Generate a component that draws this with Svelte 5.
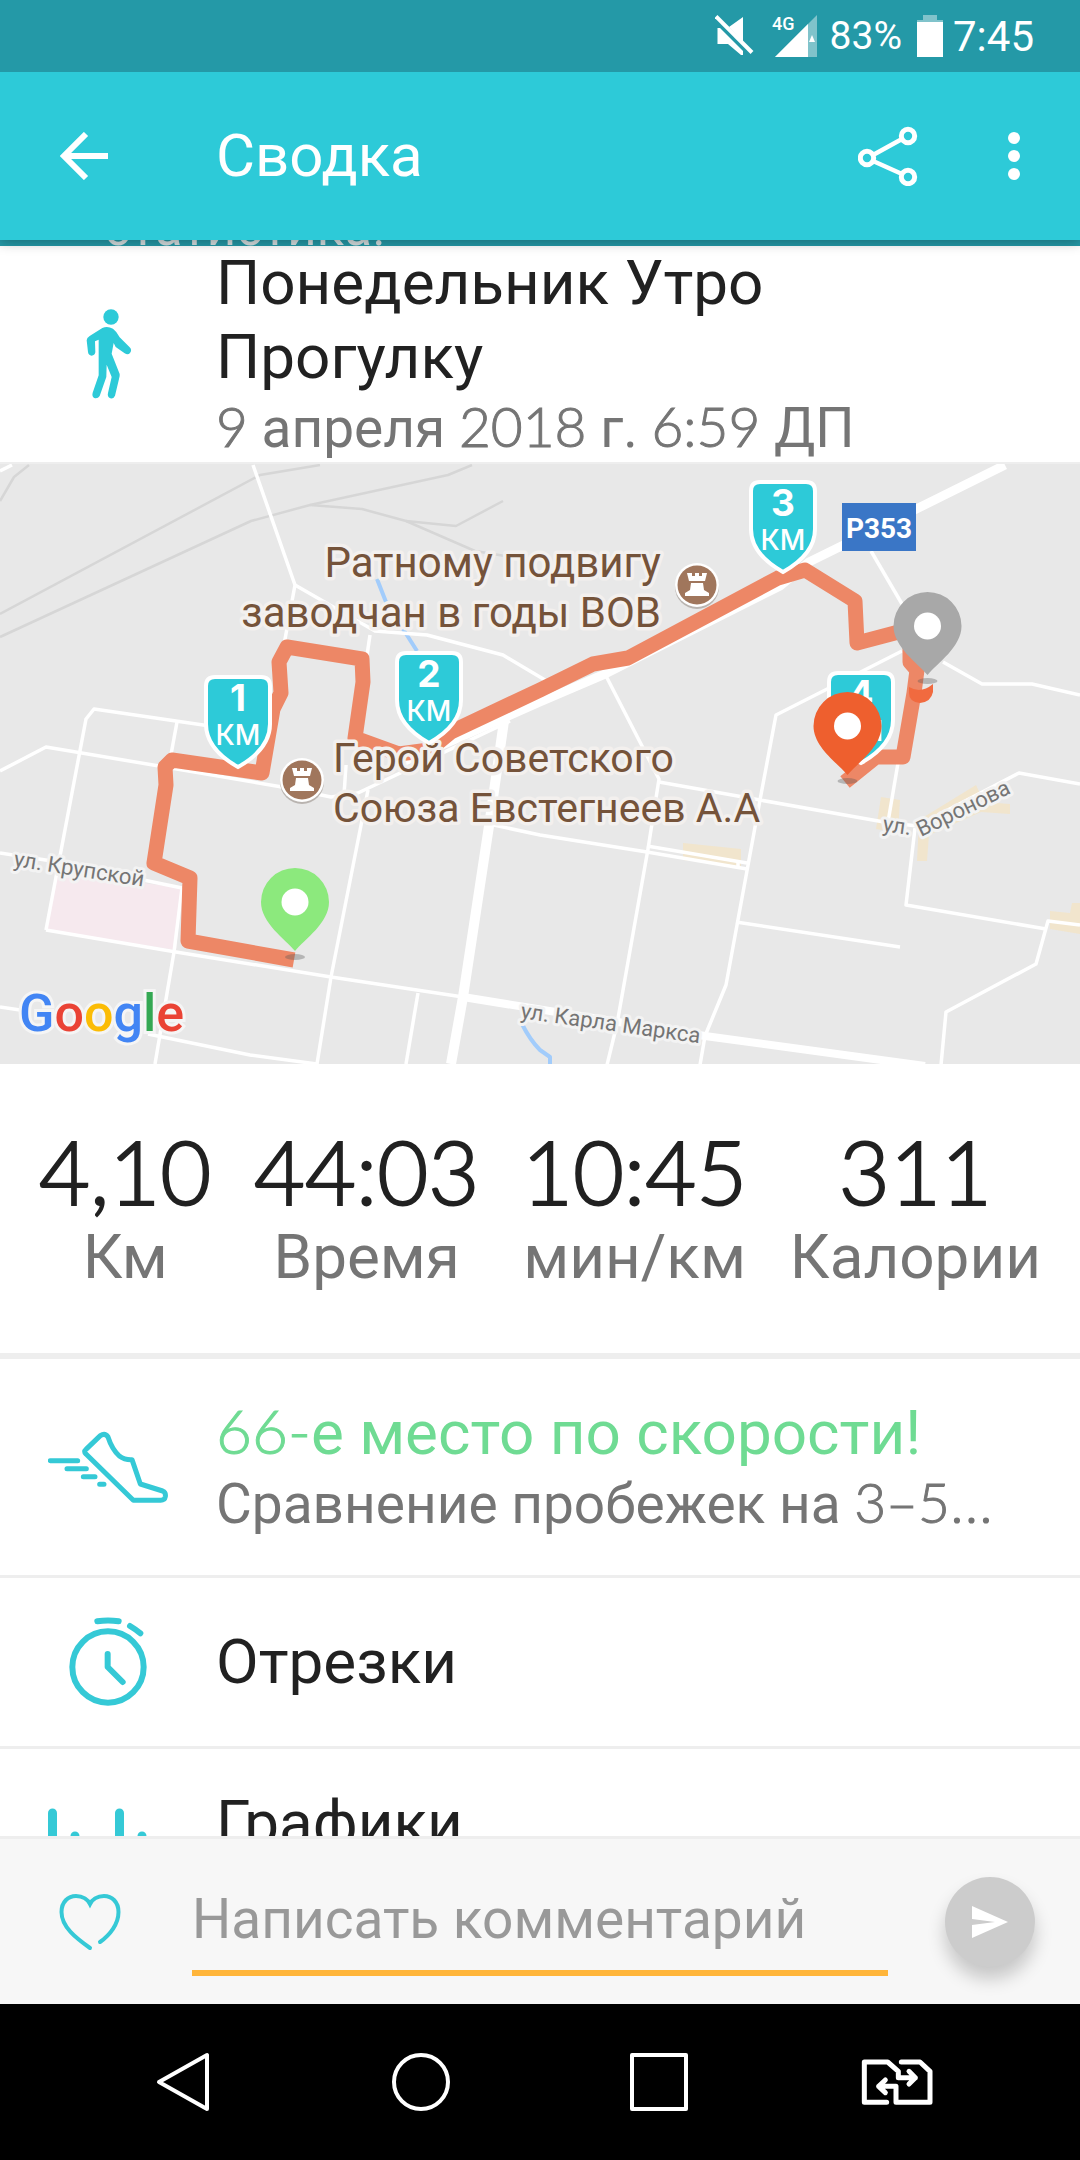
<script>
  const shields = [
    { x: 238, y: 769, n: '1' },
    { x: 429, y: 745, n: '2' },
    { x: 783, y: 574, n: '3' },
    { x: 861, y: 765, n: '4' }
  ];
  const castles = [
    { x: 302, y: 780 },
    { x: 697, y: 585 }
  ];
  const stats = [
    { value: '4,10', label: 'Км' },
    { value: '44:03', label: 'Время' },
    { value: '10:45', label: 'мин/км' },
    { value: '311', label: 'Калории' }
  ];
  const roads = [
    'M0 471L12 465', 'M253 465L295 585L283 650', 'M295 585L375 631L427 635L503 655L545 680', 'M370 635L366 662',
    'M46 930L86 719L94 709L210 726', 'M177 722L170 760', 'M0 771L46 747L165 767L282 787L331 797L358 793L510 721',
    'M0 853L52 861L182 888', 'M46 930L176 952L331 977L463 997', 'M182 888L174 952L155 1064', 'M346 765L344 795',
    'M368 790L331 977L317 1064', 'M489 824L540 835L647 852L747 869', 'M647 846L747 863', 'M738 862L738 868',
    'M418 993L406 1064', 'M0 1007L20 1010', 'M148 1034L250 1055L317 1064', 'M605 674L659 779L648 849L617 1024L607 1065',
    'M659 782L760 800L884 822L917 826', 'M902 651L776 715L760 800L726 985L705 1036L700 1065',
    'M943 662L982 684L1032 684L1080 695', 'M871 551L902 604', 'M898 763L888 822', 'M917 826L1019 773L1080 784',
    'M915 828L906 905L1046 929', 'M1080 925L1048 921L1036 964L946 1012L941 1065', 'M736 922L900 947'
  ];
  const rails = [
    'M0 614L260 475L320 465', 'M0 637L251 521L310 505L448 475L472 465', 'M310 505L362 509L406 521L475 551L505 556',
    'M406 521L456 526L503 501', 'M0 501L14 477L29 465'
  ];
</script>

{#snippet pin(x, y, color)}
  <ellipse cx={x} cy={y + 55} rx="10" ry="3" fill="#555" opacity=".35" />
  <path d="M{x} {y + 49}C{x - 10} {y + 37} {x - 34} {y + 21} {x - 34} {y}A34 34 0 0 1 {x + 34} {y}C{x + 34} {y + 21} {x + 10} {y + 37} {x} {y + 49}Z" fill={color} />
  <circle cx={x} cy={y} r="13.5" fill="#fff" />
{/snippet}

<div class="screen">
  <div class="status">
    <svg width="40" height="42" viewBox="0 0 40 42" fill="#fff" aria-label="Без звука">
      <path d="M14 12L28 2V27ZM2.5 13H5L28 36V40H26L13 29H2.5Z" />
      <path d="M1 1.5L37 37.5" stroke="#fff" stroke-width="4" />
    </svg>
    <svg class="signal" width="46" height="42" viewBox="0 0 46 42" aria-label="Сигнал 4G">
      <path d="M45 0V42H3Z" fill="#80c3cb" />
      <path d="M36 9V42H3Z" fill="#fff" />
      <path d="M40 20L43 27H37Z" fill="#fff" />
      <text class="net" x="0" y="15">4G</text>
    </svg>
    <span class="percent">83%</span>
    <svg class="battery" width="26" height="42" viewBox="0 0 26 42" aria-label="Батарея">
      <path d="M6 0H20V5H26V8H0V5H6Z" fill="#80c3cb" />
      <path d="M0 7H26V42H0Z" fill="#fff" />
    </svg>
    <span class="time">7:45</span>
  </div>

  <header>
    <button class="back" aria-label="Назад">
      <svg width="48" height="48" viewBox="0 0 48 48" fill="none" stroke="#fff" stroke-width="6"><path d="M48 24H4M26 2L4 24L26 46" /></svg>
    </button>
    <h1>Сводка</h1>
    <button aria-label="Поделиться">
      <svg width="60" height="60" viewBox="0 0 60 60" fill="none" stroke="#fff" stroke-width="5">
        <circle cx="50" cy="10" r="6.7" /><circle cx="9" cy="32" r="6.7" /><circle cx="50" cy="51" r="6.7" />
        <path d="M15 29L44 13M15 35L44 48" stroke-width="4.5" />
      </svg>
    </button>
    <button aria-label="Ещё">
      <svg width="12" height="48" viewBox="0 0 12 48" fill="#fff"><circle cx="6" cy="6" r="6" /><circle cx="6" cy="24" r="6" /><circle cx="6" cy="42" r="6" /></svg>
    </button>
  </header>

  <main>
    <div class="banner"><span>статистика!</span></div>

    <section class="row activity">
      <svg width="52" height="94" viewBox="157 52 156 282" fill="#2dcad8">
        <circle cx="244" cy="82" r="23" />
        <path d="M218 115Q233 108 250 117Q262 126 270 143L300 173Q308 181 301 190Q295 197 285 191L258 172L252 160L246 192L270 253Q271 260 268 268L256 318Q252 328 242 326Q232 322 235 310L246 262L231 225L230 262L210 319Q204 328 194 325Q186 320 189 309L207 257V150L196 155L197 188Q195 198 186 198Q176 197 175 187L171 152Q171 144 180 139Z" />
      </svg>
      <div>
        <h2>Понедельник Утро Прогулку</h2>
        <p><i>9</i> апреля <i>2018</i> г. <i>6:59</i> ДП</p>
      </div>
    </section>

    <svg class="map" viewBox="0 464 1080 600" aria-label="Карта маршрута">
      <rect y="464" width="1080" height="600" fill="#e8e8e8" />
      <path d="M57 872L182 888L176 950L46 930Z" fill="#f6e9ee" />
      <path d="M683 843L741 849V866L683 860ZM881 797L900 800L898 833L876 829ZM919 820L976 785L984 802L1010 804V814L981 812L929 835L927 861H917ZM1050 911L1070 913L1072 903H1080V934L1050 929Z" fill="#f1e5cd" />
      <g fill="none" stroke-linejoin="round">
        {#each rails as d}<path {d} stroke="#d6d6d6" stroke-width="2.5" />{/each}
        <path d="M377 579L386 602L417 651M522 1024Q530 1040 540 1050L550 1057V1065" stroke="#a2ccfb" stroke-width="4" />
        {#each roads as d}<path {d} stroke="#fff" stroke-width="3.5" />{/each}
        <path d="M400 763L458 738L540 702L605 674L780 586L809 562L872 531L1005 465" stroke="#fff" stroke-width="9" />
        <path d="M504 721L489 826L463 997L451 1064" stroke="#fff" stroke-width="10" />
        <path d="M463 997L705 1036L925 1066" stroke="#fff" stroke-width="8" />
        <path d="M294 960L188 941L190 878L154 863L166 785L165 767L172 760L262 773L273 709L281 693L279 662L287 647L362 659L363 682L355 738L399 754L429 750L451 732L540 690L593 664L628 658L778 578L805 570L855 601L857 643L910 629L910 662L917 670L914 693L903 757H876L845 782" stroke="#ed8766" stroke-width="15" />
      </g>
      <path d="M909 687Q921 694 933 684V692Q931 702 920 703Q909 702 909 693Z" fill="#f16a3f" />

      {#each castles as c}
        <circle cx={c.x} cy={c.y + 2} r="22" fill="#b9b4b0" />
        <circle cx={c.x} cy={c.y} r="22" fill="#fff" />
        <circle cx={c.x} cy={c.y} r="19.5" fill="#a0765c" />
        <path transform="translate({c.x} {c.y})" d="M-10 -12H-5V-9H-2V-12H2V-9H5V-12H10L8 -4H-8ZM-6 -2H6L7 5L12 8V11H-12V8L-7 5Z" fill="#fff" />
      {/each}

      <g class="poi">
        <text x="661" y="577" text-anchor="end">Ратному подвигу</text>
        <text x="661" y="627" text-anchor="end">заводчан в годы ВОВ</text>
      </g>
      <g class="poi hero">
        <text x="333" y="772">Герой Советского</text>
        <text x="333" y="822">Союза Евстегнеев А.А</text>
      </g>
      <g class="street">
        <text transform="translate(13 866) rotate(9)">ул. Крупской</text>
        <text transform="translate(520 1018) rotate(8)">ул. Карла Маркса</text>
        <text transform="translate(882 831) rotate(8)">ул.</text>
        <text transform="translate(921 837) rotate(-26)">Воронова</text>
      </g>

      <rect x="842" y="503" width="74" height="48" fill="#3a76c6" />
      <text class="route-no" x="879" y="538" text-anchor="middle">P353</text>

      {#each shields as s}
        <g transform="translate({s.x} {s.y})">
          <path d="M-23 -92H23Q32 -92 32 -83V-45C32 -24 16 -11 0 -2C-16 -11 -32 -24 -32 -45V-83Q-32 -92 -23 -92Z" fill="#2dcad8" stroke="#fff" stroke-width="4" />
          <text class="km-n" y="-58" text-anchor="middle">{s.n}</text>
          <text class="km" y="-24" text-anchor="middle">КМ</text>
        </g>
      {/each}
      {@render pin(295, 902, '#8ce97d')}
      {@render pin(927.5, 626, '#a8a8a8')}
      {@render pin(847.5, 726, '#ee5f2e')}

      <text class="google" x="19" y="1031"><tspan fill="#4285f4">G</tspan><tspan fill="#ea4335">o</tspan><tspan fill="#fbbc05">o</tspan><tspan fill="#4285f4">g</tspan><tspan fill="#34a853">l</tspan><tspan fill="#ea4335">e</tspan></text>
    </svg>

    <section class="stats">
      {#each stats as s}
        <div class="stat"><b>{s.value}</b><span>{s.label}</span></div>
      {/each}
    </section>

    <section class="row">
      <svg width="120" height="74" viewBox="54 60 360 222" fill="none" stroke="#35c9d6" stroke-width="15" stroke-linecap="round" stroke-linejoin="round">
        <path d="M61 152H143M111 176H169M160 200H195M209 223H222" />
        <path d="M168 118L211 77Q225 68 234 81Q246 118 268 138Q284 150 306 149L331 222L398 243Q408 247 406 260Q404 271 392 271H310L168 132Q160 125 168 118Z" />
      </svg>
      <div>
        <h2 class="rank"><i>66-</i>е место по скорости!</h2>
        <p>Сравнение пробежек на <i>3–5</i>...</p>
      </div>
    </section>

    <section class="row single">
      <svg width="84" height="94" viewBox="107 617 252 282" fill="none" stroke="#35c9d6" stroke-width="18" stroke-linecap="round" stroke-linejoin="round">
        <circle cx="233" cy="773" r="107" />
        <path d="M201 636Q233 631 265 636M299 650Q316 660 330 672M232 734V773L277 818" />
      </svg>
      <h2>Отрезки</h2>
    </section>

    <section class="row charts">
      <svg width="120" height="94" viewBox="0 0 120 94" fill="none" stroke="#35c9d6" stroke-width="9" stroke-linecap="round">
        <path d="M4.5 5V90M71.5 5V90M27 28V90M94 28V90" />
      </svg>
      <h2>Графики</h2>
    </section>
  </main>

  <form class="comment" onsubmit={(e) => e.preventDefault()}>
    <button class="like" type="button" aria-label="Нравится">
      <svg width="64" height="60" viewBox="0 0 64 60" fill="none" stroke="#35c9d6" stroke-width="4" stroke-linecap="round">
        <path d="M32 56C18 46 3.5 35 3.5 20C3.5 10 10 4 18 4C25 4 30 8 32 12C34 8 39 4 46 4C54 4 60.5 10 60.5 20C60.5 32 52 43 42 50" />
      </svg>
    </button>
    <input type="text" placeholder="Написать комментарий" aria-label="Написать комментарий" />
    <button class="send" aria-label="Отправить">
      <svg width="38" height="34" viewBox="0 0 38 34" fill="#fff"><path d="M1 1L37 17L1 33V20L24 17L1 14Z" /></svg>
    </button>
  </form>

  <nav>
    <button aria-label="Назад"><svg width="60" height="60" viewBox="0 0 60 60"><path d="M54 3V57L6 30Z" /></svg></button>
    <button aria-label="Домой"><svg width="60" height="60" viewBox="0 0 60 60"><circle cx="30" cy="30" r="27" /></svg></button>
    <button aria-label="Обзор"><svg width="60" height="60" viewBox="0 0 60 60"><path d="M3 3H57V57H3Z" /></svg></button>
    <button aria-label="Переключить SIM">
      <svg width="74" height="52" viewBox="60 588 222 156"><path stroke-width="15" stroke-linecap="round" d="M140 727H73V606H143L175 634V653H226M207 634L226 653L207 672M184 606H240L270 634V727H168V679H116M136 660L116 679L136 698" /></svg>
    </button>
  </nav>
</div>

<style>
  .screen {
    display: flex;
    flex-direction: column;
    height: 100vh;
    background: #fff;
    color: #212121;
    font-family: Roboto, 'Liberation Sans', sans-serif;
  }
  .screen :is(h1, h2, p) { margin: 0; font-weight: 400; }
  button { padding: 0; border: 0; background: none; display: flex; align-items: center; }
  svg { display: block; }
  i, .stat b { font-family: Lato, sans-serif; font-style: normal; font-weight: 300; }
  i { line-height: 1; -webkit-text-stroke: 1px; }

  .status {
    position: relative;
    z-index: 2;
    display: flex;
    align-items: center;
    justify-content: flex-end;
    height: 72px;
    padding-right: 46px;
    background: #2499a7;
    color: #fff;
    font-size: 40px;
  }
  .signal { margin: 0 12px 0 17px; }
  .battery { margin: 0 10px 0 15px; }
  .percent { font-size: 39px; }
  .time { font-size: 42px; }
  .net { fill: #fff; font-size: 18px; font-weight: 500; }

  header {
    position: relative;
    z-index: 1;
    display: flex;
    align-items: center;
    height: 168px;
    padding-right: 60px;
    gap: 90px;
    background: #2dcad8;
    box-shadow: 0 2px 12px rgba(0, 0, 0, 0.3);
  }
  .back { width: 216px; padding-left: 60px; margin-right: -90px; }
  h1 { flex: 1; color: #fff; font-size: 60px; line-height: 74px; }

  main { flex: 1 1 0; min-height: 0; overflow: hidden; }
  .banner {
    display: flex;
    align-items: flex-end;
    height: 6px;
    overflow: hidden;
    padding-left: 104px;
    background: #2499a7;
    color: #d5dfe0;
    font-size: 51px;
    line-height: 36px;
  }
  .row {
    display: grid;
    grid-template-columns: 216px 1fr;
    align-items: center;
    height: 216px;
    border-bottom: 3px solid #eee;
  }
  .row > svg { justify-self: center; }
  .activity { border-bottom-width: 2px; }
  .activity h2 { max-width: 660px; }
  .single { height: 168px; }
  .charts { align-items: start; padding-top: 37px; }
  .charts > svg { margin-top: 22px; }
  h2 { font-size: 62px; line-height: 74px; }
  .rank { color: #6fdb93; }
  p { color: #757575; font-size: 55px; line-height: 68px; }

  .map { width: 100%; }
  .map text { font-family: Roboto, sans-serif; }
  .poi { fill: #75533a; font-size: 42px; stroke: #f3f0ee; stroke-width: 7px; stroke-linejoin: round; paint-order: stroke; }
  .hero { font-size: 41px; }
  .street { fill: #757575; font-size: 22px; stroke: #f3f3f3; stroke-width: 6px; stroke-linejoin: round; paint-order: stroke; }
  .map .route-no { fill: #fff; font-size: 28px; font-weight: 700; }
  .map .km-n { fill: #fff; font-family: Inter, sans-serif; font-size: 37px; font-weight: 700; }
  .map .km { fill: #fff; font-family: Inter, sans-serif; font-size: 28px; font-weight: 500; }
  .map .google { font-size: 52px; font-weight: 500; stroke: #f5f5f5; stroke-width: 6px; paint-order: stroke; }

  .stats {
    display: flex;
    justify-content: space-between;
    padding: 58px 39px 59px;
    border-bottom: 6px solid #eee;
  }
  .stat { display: flex; flex-direction: column; align-items: center; }
  .stat b { font-size: 88px; line-height: 98px; -webkit-text-stroke: 2px; }
  .stat span { color: #757575; font-size: 62px; line-height: 74px; }

  .comment {
    display: flex;
    align-items: center;
    height: 168px;
    box-sizing: border-box;
    border-top: 3px solid #eee;
    background: #f7f7f7;
    padding-right: 45px;
  }
  .like { width: 192px; padding-left: 58px; }
  input {
    flex: 1;
    min-width: 0;
    box-sizing: border-box;
    height: 108px;
    margin: 0 57px 0 0;
    padding: 0;
    border: 0;
    border-bottom: 6px solid #ffb53a;
    border-radius: 0;
    background: none;
    outline: none;
    font: 400 55px Roboto, sans-serif;
  }
  input::placeholder { color: #999; opacity: 1; }
  .send {
    width: 90px;
    height: 90px;
    justify-content: center;
    border-radius: 50%;
    background: #ccc;
    box-shadow: 0 12px 18px rgba(0, 0, 0, 0.2);
  }

  nav { display: flex; height: 156px; padding: 0 64px; background: #000; }
  nav button { flex: 1; justify-content: center; }
  nav svg { fill: none; stroke: #fff; stroke-width: 4px; stroke-linejoin: round; }
  nav button:last-child svg { stroke-width: 15px; }
</style>
